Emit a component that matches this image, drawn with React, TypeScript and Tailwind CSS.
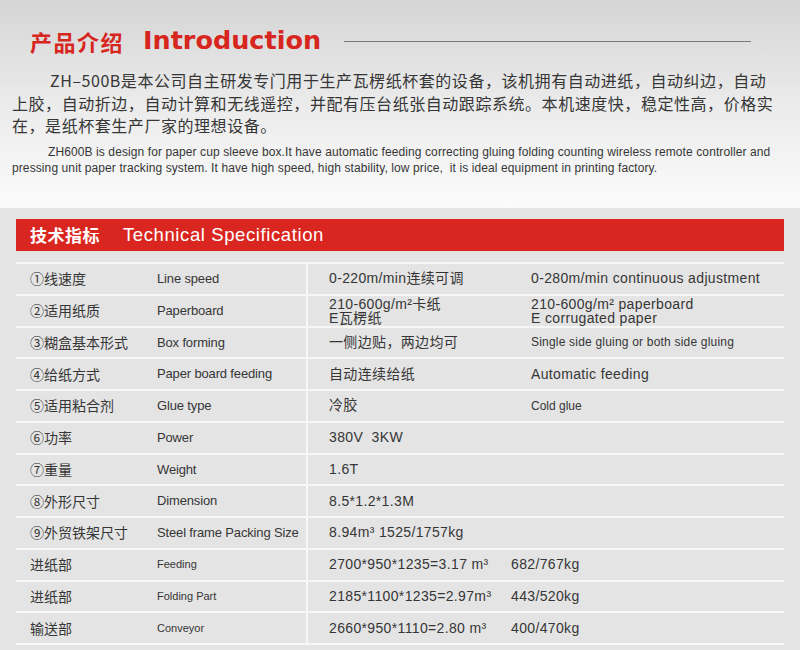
const cjk = { fontFamily: '"Noto Sans CJK SC", "Liberation Sans", sans-serif' };
const latin = { fontFamily: '"Liberation Sans", Arial, "Noto Sans CJK SC", sans-serif' };

type Row = {
  cn: string;
  en: string;
  enSmall?: boolean;
  value: React.ReactNode;
  extra?: React.ReactNode;
};

function Measure({ main, kg }: { main: string; kg: string }) {
  return (
    <span className="flex items-center">
      <span className="w-[182px] whitespace-nowrap">{main}</span>
      <span>{kg}</span>
    </span>
  );
}

const rows: Row[] = [
  {
    cn: "①线速度",
    en: "Line speed",
    value: "0-220m/min连续可调",
    extra: "0-280m/min continuous adjustment",
  },
  {
    cn: "②适用纸质",
    en: "Paperboard",
    value: (
      <span className="block leading-[14px] pt-[1px]">
        210-600g/m²卡纸
        <br />
        E瓦楞纸
      </span>
    ),
    extra: (
      <span className="block leading-[14px] pt-[1px]">
        210-600g/m² paperboard
        <br />E corrugated paper
      </span>
    ),
  },
  {
    cn: "③糊盒基本形式",
    en: "Box forming",
    value: "一侧边贴，两边均可",
    extra: <span className="text-[12px] tracking-[0.2px]">Single side gluing or both side gluing</span>,
  },
  { cn: "④给纸方式", en: "Paper board feeding", value: "自动连续给纸", extra: "Automatic feeding" },
  {
    cn: "⑤适用粘合剂",
    en: "Glue type",
    value: "冷胶",
    extra: <span className="text-[12px] tracking-normal">Cold glue</span>,
  },
  { cn: "⑥功率", en: "Power", value: "380V\u00a0\u00a03KW" },
  { cn: "⑦重量", en: "Weight", value: "1.6T" },
  { cn: "⑧外形尺寸", en: "Dimension", value: "8.5*1.2*1.3M" },
  { cn: "⑨外贸铁架尺寸", en: "Steel frame Packing Size", value: "8.94m³ 1525/1757kg" },
  { cn: "进纸部", en: "Feeding", enSmall: true, value: <Measure main="2700*950*1235=3.17 m³" kg="682/767kg" /> },
  { cn: "进纸部", en: "Folding Part", enSmall: true, value: <Measure main="2185*1100*1235=2.97m³" kg="443/520kg" /> },
  { cn: "输送部", en: "Conveyor", enSmall: true, value: <Measure main="2660*950*1110=2.80 m³" kg="400/470kg" /> },
];

export default function App() {
  return (
    <div className="w-[800px] h-[650px] overflow-hidden flex flex-col text-[#363636]" style={latin}>
      {/* Introduction */}
      <section className="h-[208px] shrink-0 bg-gradient-to-b from-[#d5d5d5] via-[#ebebeb] to-[#fbfbfb]">
        <div className="flex items-center h-[24px] mt-[29px] pl-[30px]">
          <span className="text-[22px] font-bold tracking-[1.5px] text-[#d7261d]" style={cjk}>
            产品介绍
          </span>
          <span
            className="ml-[19px] text-[25.5px] font-bold text-[#d7261d] leading-none"
            style={{ fontFamily: '"DejaVu Sans", sans-serif' }}
          >
            Introduction
          </span>
          <div className="ml-[23px] w-[407px] h-px bg-[#7a7a7a]" />
        </div>

        <div className="mt-[16px] px-[12px] text-[16px] leading-[22.5px] tracking-[0.55px] whitespace-nowrap" style={cjk}>
          <div className="pl-[38px]">ZH–500B是本公司自主研发专门用于生产瓦楞纸杯套的设备，该机拥有自动进纸，自动纠边，自动</div>
          <div>上胶，自动折边，自动计算和无线遥控，并配有压台纸张自动跟踪系统。本机速度快，稳定性高，价格实</div>
          <div>在，是纸杯套生产厂家的理想设备。</div>
        </div>

        <div className="mt-[7px] px-[12px] text-[12px] leading-[16.5px] tracking-[0.1px] whitespace-nowrap">
          <div className="pl-[36px]">
            ZH600B is design for paper cup sleeve box.It have automatic feeding correcting gluing folding counting wireless remote controller and
          </div>
          <div>pressing unit paper tracking system. It have high speed, high stability, low price,&nbsp; it is ideal equipment in printing factory.</div>
        </div>
      </section>

      {/* Technical specification */}
      <section className="flex-1 bg-[#e4e4e4] px-[16px] pt-[11px]">
        <div className="h-[32px] bg-[#da2620] flex items-center pl-[14px] text-white">
          <span className="text-[17px] font-bold tracking-[0.5px]" style={cjk}>
            技术指标
          </span>
          <span className="ml-[23px] text-[18.5px] tracking-[0.6px]">Technical Specification</span>
        </div>

        <div className="mt-[11px] border-t-2 border-[#f7f7f7]">
          {rows.map((r, i) => (
            <div key={i} className="flex h-[31.75px] border-b-2 border-[#f7f7f7]">
              <div className="w-[141px] pl-[14px] flex items-center text-[14px]" style={cjk}>
                {r.cn}
              </div>
              <div
                className={`w-[151px] border-r-2 border-[#f7f7f7] flex items-center whitespace-nowrap ${
                  r.enSmall ? "text-[11px]" : "text-[13px] tracking-[-0.15px]"
                }`}
              >
                {r.en}
              </div>
              <div
                className="w-[223px] pl-[21px] flex items-center text-[14px] tracking-[0.35px] whitespace-nowrap overflow-visible"
                style={latin}
              >
                {r.value}
              </div>
              <div className="flex-1 flex items-center text-[14px] tracking-[0.35px] whitespace-nowrap">{r.extra}</div>
            </div>
          ))}
        </div>
      </section>
    </div>
  );
}
